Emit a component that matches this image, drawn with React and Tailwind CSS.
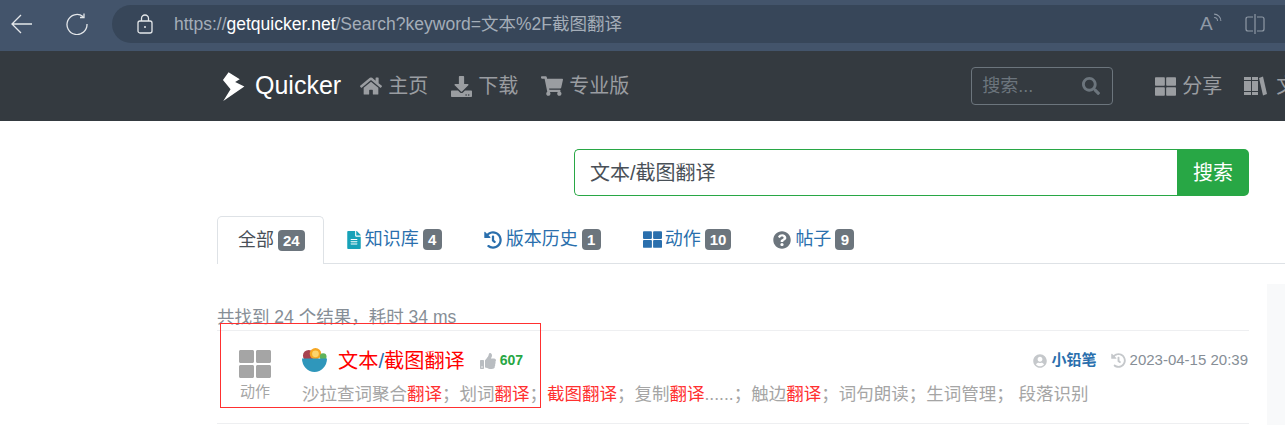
import { FaHome, FaDownload, FaShoppingCart, FaSearch, FaThLarge, FaFileAlt, FaHistory, FaQuestionCircle, FaThumbsUp, FaUserCircle } from "react-icons/fa";

const font = { fontFamily: '"Liberation Sans", "Noto Sans CJK SC", sans-serif' };

function Logo() {
  return (
    <svg viewBox="0 0 66 88" className="h-[29px] w-[23px] shrink-0 text-white" fill="currentColor">
      <path d="M18 1 L52 22 L38 30 L66 44 L2 88 L24 52 L1 24 Z" />
    </svg>
  );
}

function NavItem({ icon, label }) {
  return (
    <div className="flex shrink-0 items-center gap-[6px] text-[20px] text-[#9a9da1]">
      {icon}
      <span>{label}</span>
    </div>
  );
}

function Badge({ children }) {
  return (
    <span className="ml-[4px] inline-flex h-[21px] min-w-[19px] items-center justify-center rounded-[4px] bg-[#6c757d] px-[5px] text-[15px] font-bold leading-none text-white">
      {children}
    </span>
  );
}

function Tab({ icon, label, count, active }) {
  return (
    <div
      className={
        active
          ? "-mb-px flex h-[48px] items-center rounded-t-[5px] border border-b-0 border-[#dee2e6] bg-white pl-[20px] pr-[18px] text-[18px] text-[#495057]"
          : "flex h-[47px] items-center px-[21px] text-[18px] text-[#2a6fad]"
      }
    >
      {icon}
      <span>{label}</span>
      <Badge>{count}</Badge>
    </div>
  );
}

function Salad() {
  return (
    <svg viewBox="0 0 26 26" className="h-[25px] w-[25px]">
      <circle cx="7" cy="8" r="6" fill="#a8424f" />
      <circle cx="14" cy="6" r="6" fill="#f5a623" />
      <circle cx="14" cy="6" r="3.5" fill="#fbd46d" />
      <circle cx="22" cy="9" r="3.5" fill="#5fb35a" />
      <path d="M0 11 H26 A13 14 0 0 1 0 11 Z" fill="#2f97bb" />
    </svg>
  );
}

const Hit = ({ children }) => <span className="text-[#ff3030]">{children}</span>;

export default function App() {
  return (
    <div className="relative h-[425px] w-[1285px] overflow-hidden bg-white" style={font}>
      {/* browser bar */}
      <div className="flex h-[51px] items-center bg-[#43546b] pb-[3px] pl-[11px]">
        <svg viewBox="0 0 22 20" className="h-[20px] w-[22px] text-[#e4e7ea]" fill="none" stroke="currentColor" strokeWidth="1.3">
          <path d="M21 10 H1 M10 1 L1 10 L10 19" />
        </svg>
        <svg viewBox="0 0 22 22" className="ml-[33px] h-[22px] w-[22px] text-[#e4e7ea]" fill="none" stroke="currentColor" strokeWidth="1.3">
          <path d="M17 3.5 A10 10 0 1 0 21 11 M14 4.5 H18 V0.5" />
        </svg>
        <div className="ml-[24px] flex h-[38px] flex-1 items-center rounded-l-[19px] bg-[#374659] pl-[25px]">
          <svg viewBox="0 0 16 20" className="h-[20px] w-[16px] text-[#e4e7ea]" fill="none" stroke="currentColor" strokeWidth="1.3">
            <rect x="1" y="7" width="14" height="12" rx="2" />
            <path d="M4.5 7 V4.5 A3.5 3.5 0 0 1 11.5 4.5 V7" />
            <circle cx="8" cy="13" r="1" fill="currentColor" stroke="none" />
          </svg>
          <div className="ml-[21px] text-[17.5px] text-[#a4adb8]">
            https://<span className="text-white">getquicker.net</span>/Search?keyword=文本%2F截图翻译
          </div>
          <div className="ml-auto flex items-center gap-[25px] pr-[20px]">
            <div className="relative h-[20px] w-[20px] text-[19px] leading-[20px] text-[#8f99a6]">
              A
              <svg viewBox="0 0 8 8" className="absolute -right-[2px] -top-[1px] h-[9px] w-[9px]" fill="none" stroke="#8f99a6" strokeWidth="0.9">
                <path d="M1 1 A6 6 0 0 1 7 7 M1 4 A3 3 0 0 1 4 7" />
              </svg>
            </div>
            <svg viewBox="0 0 20 20" className="h-[20px] w-[20px]" fill="none" stroke="#8f99a6" strokeWidth="1.2">
              <path d="M10 0 V20 M8 3 H3 Q1 3 1 5 V15 Q1 17 3 17 H8 M12 3 H17 Q19 3 19 5 V15 Q19 17 17 17 H12" />
            </svg>
          </div>
        </div>
      </div>

      {/* site nav */}
      <div className="flex h-[70px] items-center whitespace-nowrap bg-[#343a40] pl-[222px]">
        <Logo />
        <span className="ml-[10px] shrink-0 text-[25px] text-white">Quicker</span>
        <div className="ml-[19px] flex shrink-0 items-center gap-[23px]">
          <NavItem icon={<FaHome className="text-[22px]" />} label="主页" />
          <NavItem icon={<FaDownload className="text-[21px]" />} label="下载" />
          <NavItem icon={<FaShoppingCart className="text-[22px]" />} label="专业版" />
        </div>
        <div className="ml-[342px] flex h-[38px] w-[142px] shrink-0 items-center justify-between rounded-[4px] border border-[#6c757d] pl-[10px] pr-[12px] text-[18px] text-[#6c757d]">
          <span>搜索...</span>
          <FaSearch className="text-[18px]" />
        </div>
        <div className="ml-[42px] flex shrink-0 items-center gap-[22px]">
          <NavItem icon={<FaThLarge className="text-[21px]" />} label="分享" />
          <NavItem
            icon={
              <svg viewBox="0 0 23 20" className="mr-[3px] h-[20px] w-[23px]" fill="currentColor">
                <path d="M0 1 H7 V4 H0 Z M0 5 H7 V15 H0 Z M0 16 H7 V19 H0 Z" />
                <path d="M8 1 H14 V4 H8 Z M8 5 H14 V15 H8 Z M8 16 H14 V19 H8 Z" />
                <path d="M15 2 L19 0.5 L23 18 L19 19.5 Z" />
              </svg>
            }
            label="文档"
          />
        </div>
      </div>

      {/* search */}
      <div className="ml-[574px] mt-[28px] flex h-[47px] w-[675px]">
        <div className="flex flex-1 items-center rounded-l-[5px] border border-r-0 border-[#28a745] pl-[15px] text-[20px] text-[#495057]">
          文本/截图翻译
        </div>
        <div className="flex w-[72px] items-center justify-center rounded-r-[5px] bg-[#28a745] text-[20px] text-white">
          搜索
        </div>
      </div>

      {/* tabs */}
      <div className="ml-[217px] mt-[20px] flex w-[1068px] border-b border-[#dee2e6]">
        <Tab active label="全部" count="24" />
        <Tab icon={<FaFileAlt className="mr-[2px] text-[18px] text-[#17a2b8]" />} label="知识库" count="4" />
        <Tab icon={<FaHistory className="mr-[4px] text-[18px]" />} label="版本历史" count="1" />
        <Tab icon={<FaThLarge className="mr-[3px] text-[19px]" />} label="动作" count="10" />
        <Tab icon={<FaQuestionCircle className="mr-[4px] text-[18px] text-[#6c757d]" />} label="帖子" count="9" />
      </div>

      {/* results */}
      <div className="ml-[217px] mt-[40px] w-[1032px]">
        <div className="h-[26px] text-[17.5px] leading-[26px] text-[#868e96]">共找到 24 个结果，耗时 34 ms</div>
        <div className="flex h-[94px] border-y border-[#eeeff1]">
          <div className="ml-[3px] flex w-[70px] flex-col items-center pt-[17px] text-[#a5a5a5]">
            <FaThLarge className="text-[32px]" />
            <span className="text-[15px] leading-[24px]">动作</span>
          </div>
          <div className="ml-[12px] flex-1 pt-[15px]">
            <div className="flex items-center">
              <Salad />
              <div className="ml-[11px] mt-[1px] text-[20.2px] leading-[28px] text-[#2a6fad]">
                <span className="text-[#ff0000]">文本</span>/<span className="text-[#ff0000]">截图翻译</span>
              </div>
              <FaThumbsUp className="ml-[15px] text-[16px] text-[#b9bdc1]" />
              <span className="ml-[4px] text-[14px] font-bold text-[#28a745]">607</span>
              <div className="ml-auto flex items-center pr-px text-[15px]">
                <FaUserCircle className="text-[14px] text-[#c5c8cb]" />
                <span className="ml-[5px] text-[15px] font-bold text-[#2a6fad]">小铅笔</span>
                <FaHistory className="ml-[14px] text-[15px] text-[#c5c8cb]" />
                <span className="ml-[4px] text-[#868e96]">2023-04-15 20:39</span>
              </div>
            </div>
            <div className="mt-[7px] whitespace-nowrap text-[17.5px] leading-[24px] text-[#a5a5a5]">
              沙拉查词聚合<Hit>翻译</Hit>；划词<Hit>翻译</Hit>；<Hit>截图翻译</Hit>；复制<Hit>翻译</Hit>......；触边<Hit>翻译</Hit>；词句朗读；生词管理； 段落识别
            </div>
          </div>
        </div>
      </div>

      {/* red highlight box drawn over the result */}
      <div className="absolute left-[220px] top-[323px] h-[85px] w-[321px] border border-[#ff3030]" />
      {/* side panel at the right edge */}
      <div className="absolute left-[1267px] top-[284px] h-[141px] w-[18px] bg-[#f8f9fa]" />
    </div>
  );
}
